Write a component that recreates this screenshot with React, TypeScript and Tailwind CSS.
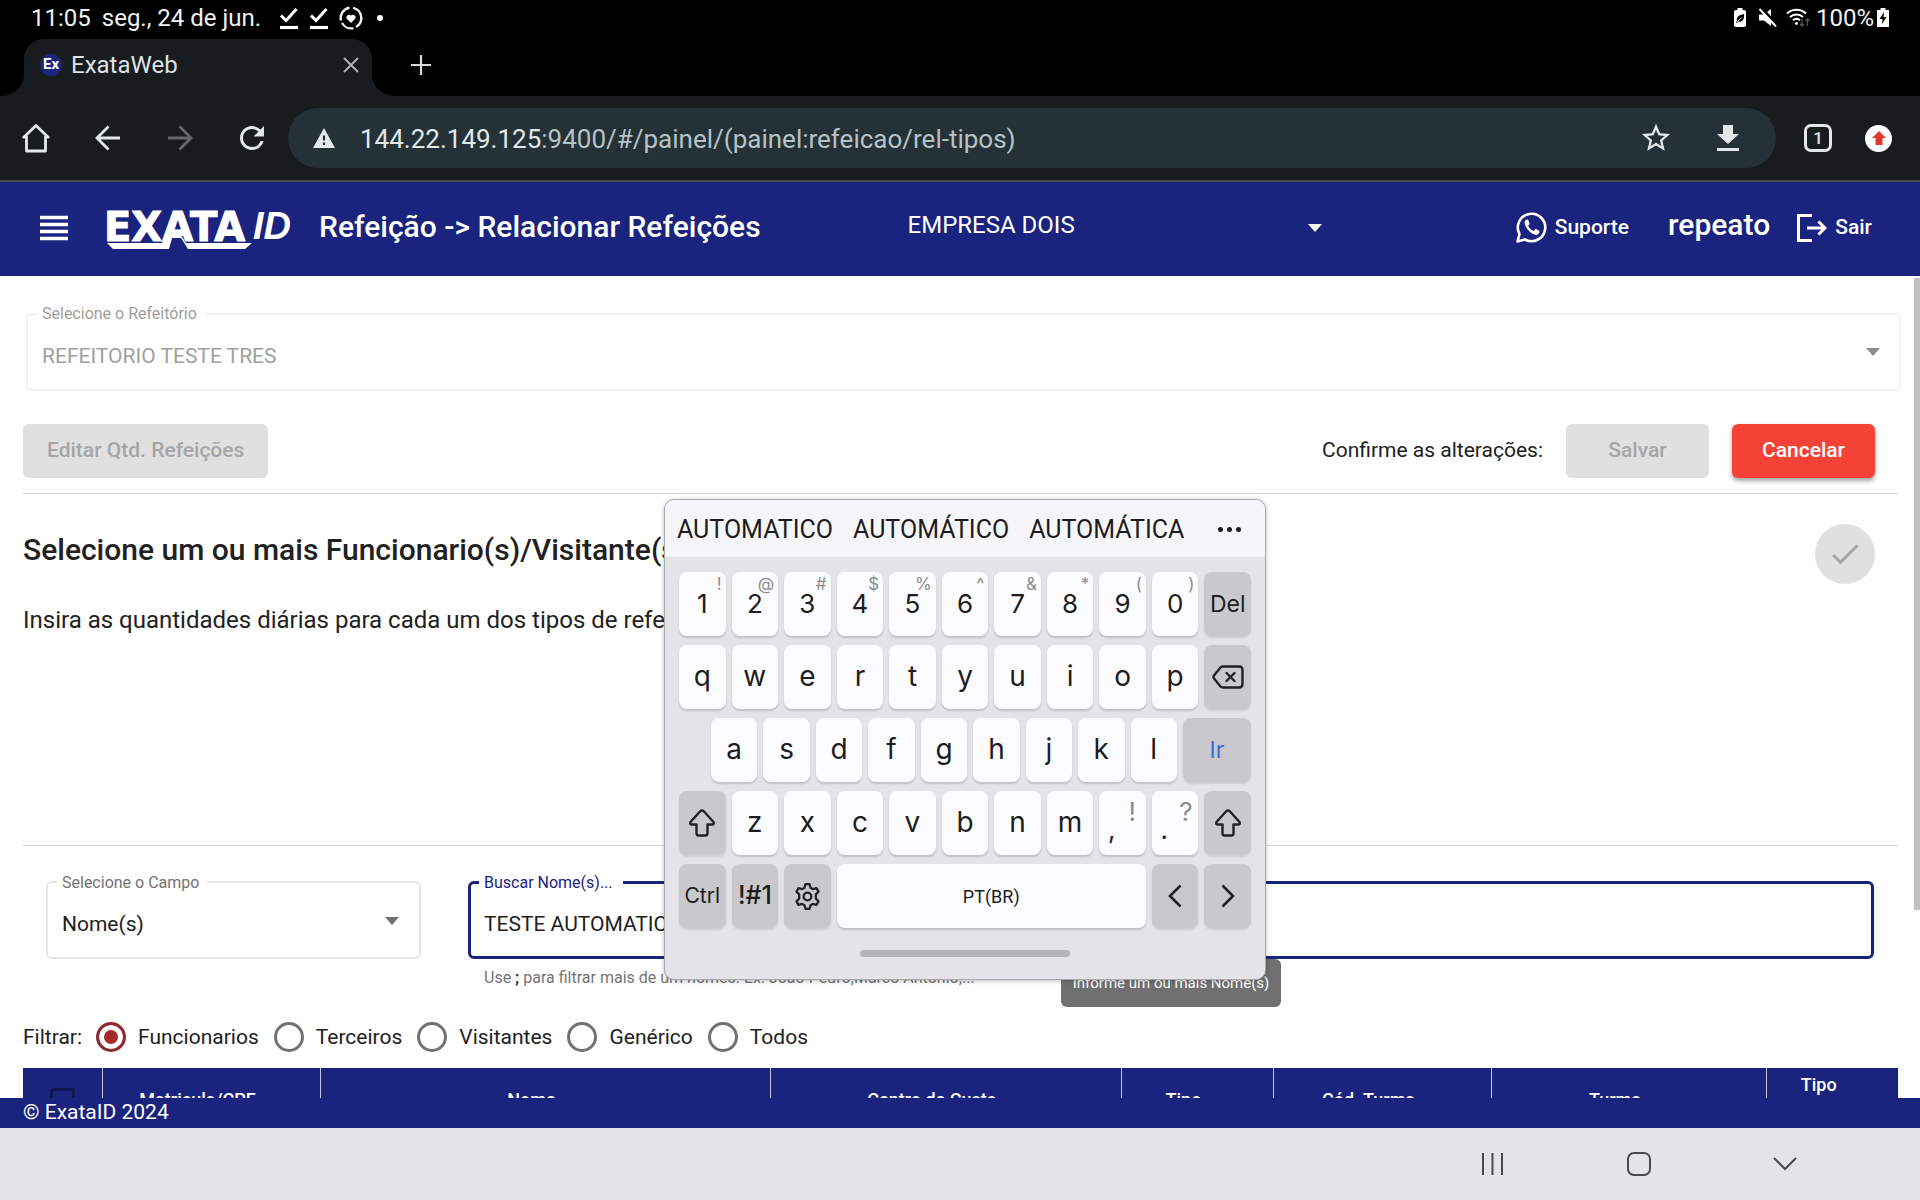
import React from "react";
import { MdStarOutline, MdCheck, MdViewHeadline, MdRefresh } from "react-icons/md";

const LIGHT = "#e3e8ea";

function DoneIcon() {
  return (
    <svg width="20" height="24" viewBox="0 0 20 24" fill="none" stroke="#fff" aria-hidden="true">
      <path d="M2 9.5 7 14.5 17.5 3" strokeWidth="3" />
      <path d="M1 21.5H19" strokeWidth="3.2" />
    </svg>
  );
}

function HealthIcon() {
  return (
    <svg width="24" height="24" viewBox="0 0 24 24" fill="none" stroke="#eee" strokeWidth="2.4" aria-hidden="true">
      <path d="M14 1.8A10.4 10.4 0 0 1 17 21" />
      <path d="M14.5 22.1A10.4 10.4 0 0 1 3 17" />
      <path d="M2 14.5A10.4 10.4 0 0 1 10.5 1.7" />
      <path d="M12 17 7.6 12.6a2.7 2.7 0 0 1 4.4-3 2.7 2.7 0 0 1 4.4 3Z" fill="#fff" stroke="none" />
    </svg>
  );
}

function StatusBar() {
  return (
    <div className="flex h-[39px] shrink-0 items-center justify-between bg-black pr-[31px] pb-1 pl-[31px] text-[24px] leading-[32px] text-[#f1f1f1]">
      <div className="flex items-center">
        <span>11:05</span>
        <span className="ml-[11px]">seg., 24 de jun.</span>
        <div className="ml-[18px] flex items-center gap-[10px]">
          <DoneIcon />
          <DoneIcon />
          <HealthIcon />
          <span className="ml-1 size-[6px] rounded-full bg-white" />
        </div>
      </div>
      <div className="flex items-center">
        <svg width="12" height="19" viewBox="0 0 12 19" className="mr-3" aria-hidden="true">
          <path d="M3.5 0h5v2H10a2 2 0 0 1 2 2v13a2 2 0 0 1-2 2H2a2 2 0 0 1-2-2V4a2 2 0 0 1 2-2h1.500Z" fill="#fff" />
          <path d="M10 6c.6 5-1.400 8.500-5.500 7.500L3 15l-1-.7 1-1.500C2 9 5 7 10 6Z" fill="#000" />
          <path d="M3 14 7.500 9.500" stroke="#fff" strokeWidth=".9" />
        </svg>
        <svg width="20" height="20" viewBox="0 0 20 20" className="mr-2" aria-hidden="true">
          <path d="M1 6.500h5L13 1v17l-7-5.500H1Z" fill="#fff" />
          <path d="M2.500 0 20 18.500" stroke="#000" strokeWidth="4" />
          <path d="M1.500 1 18 18.500" stroke="#fff" strokeWidth="2" />
        </svg>
        <svg width="24" height="20" viewBox="0 0 24 20" fill="none" stroke="#fff" strokeWidth="2" className="mr-[6px]" aria-hidden="true">
          <path d="M1 5.500a14 14 0 0 1 19 0" />
          <path d="M4 9a9.500 9.500 0 0 1 13 0" />
          <path d="M7 12.300a5 5 0 0 1 7 0" />
          <circle cx="10.500" cy="15.500" r="1.400" fill="#fff" stroke="none" />
          <path d="M16 11v7m-2-2 2 2 2-2M21.500 18v-7m-2 2 2-2 2 2" stroke="#555" strokeWidth="1.300" />
        </svg>
        <span>100%</span>
        <svg width="12" height="19" viewBox="0 0 12 19" className="ml-[3px]" aria-hidden="true">
          <path d="M3.500 0h5v2H12v17H0V2h3.500Z" fill="#fff" />
          <path d="M7 4 2.500 11h3L5 16l4.500-7h-3Z" fill="#000" />
        </svg>
      </div>
    </div>
  );
}

function TabStrip() {
  return (
    <div className="flex h-[57px] shrink-0 bg-black text-[24px] text-[#dfe2e4]">
      <div className="flex w-6 items-stretch bg-[#191c1f]">
        <div className="flex-1 rounded-br-[22px] bg-black" />
      </div>
      <div className="bg-black">
        <div className="flex h-full w-[348px] items-center rounded-t-[20px] bg-[#191c1f] pr-[12px] pb-[6px] pl-[16px]">
          <span className="flex size-[22px] items-center justify-center rounded-full bg-[#1e237e] text-[15px] leading-none font-bold text-white">
            Ex
          </span>
          <span className="ml-[9px]">ExataWeb</span>
          <button aria-label="Fechar aba" className="ml-auto">
            <svg width="18" height="18" viewBox="0 0 18 18" stroke="#aeb3b5" strokeWidth="2" aria-hidden="true">
              <path d="M2 2 16 16M16 2 2 16" />
            </svg>
          </button>
        </div>
      </div>
      <div className="flex w-[22px] items-stretch bg-[#191c1f]">
        <div className="flex-1 rounded-bl-[22px] bg-black" />
      </div>
      <button aria-label="Nova aba" className="ml-[16px] self-center pb-[6px]">
        <svg width="22" height="22" viewBox="0 0 22 22" stroke="#d6dadc" strokeWidth="2.200" aria-hidden="true">
          <path d="M11 1V21M1 11H21" />
        </svg>
      </button>
    </div>
  );
}

function Toolbar() {
  return (
    <div className="flex h-[86px] shrink-0 items-center border-b-2 border-[#3f4a4a] bg-[#191c1f] pr-[28px] pl-[20px]">
      <div className="flex w-[268px] items-center gap-10">
        <button aria-label="Início">
          <svg width="32" height="32" viewBox="0 0 32 32" fill="none" stroke={LIGHT} strokeWidth="2.800" strokeLinejoin="round" aria-hidden="true">
            <path d="M3 16 16 3.500 29 16M6.500 14V29h19V14" />
          </svg>
        </button>
        <button aria-label="Voltar">
          <svg width="32" height="32" viewBox="0 0 32 32" fill="none" stroke={LIGHT} strokeWidth="2.800" aria-hidden="true">
            <path d="M28 16H5M16.500 4.500 5 16 16.500 27.500" />
          </svg>
        </button>
        <button aria-label="Avançar">
          <svg width="32" height="32" viewBox="0 0 32 32" fill="none" stroke="#666a6c" strokeWidth="2.800" aria-hidden="true">
            <path d="M4 16H27M15.500 4.500 27 16 15.500 27.500" />
          </svg>
        </button>
        <button aria-label="Recarregar" className="-ml-[2px]">
          <MdRefresh size={36} color={LIGHT} />
        </button>
      </div>
      <div className="flex h-[60px] flex-1 items-center rounded-full bg-[#243238] pr-[32px] pl-[25px]">
        <svg width="22" height="20" viewBox="0 0 22 20" aria-hidden="true">
          <path d="M11 0 22 20H0Z" fill={LIGHT} />
          <path d="M11 7.500v5M11 14.500v2.500" stroke="#243238" strokeWidth="2.200" />
        </svg>
        <div className="ml-[25px] flex-1 pt-[2px] text-[26px] leading-[34px] text-[#b6c2c6]">
          <span className="text-[#e3e8ea]">144.22.149.125</span>:9400/#/painel/(painel:refeicao/rel-tipos)
        </div>
        <button aria-label="Favoritar" className="mr-[39px]">
          <MdStarOutline size={34} color={LIGHT} />
        </button>
        <button aria-label="Baixar">
          <svg width="32" height="30" viewBox="0 0 32 30" fill={LIGHT} aria-hidden="true">
            <path d="M11 2h10v9h6L16 21 5 11h6ZM5 25h22v3H5Z" />
          </svg>
        </button>
      </div>
      <button className="ml-[28px] flex size-[28px] items-center justify-center rounded-[7px] border-[3px] border-[#e3e8ea] text-[17px] leading-none font-medium text-[#e3e8ea]">
        1
      </button>
      <button aria-label="Atualizar" className="ml-[33px] flex size-[27px] items-center justify-center rounded-full bg-white">
        <svg width="14" height="14" viewBox="0 0 14 14" fill="#e0382c" aria-hidden="true">
          <path d="M7 0 14 7H10.500V14h-7V7H0Z" />
        </svg>
      </button>
    </div>
  );
}

function Logo() {
  return (
    <div className="relative ml-[29px] flex h-[46px] w-[195px] items-start whitespace-nowrap text-white">
      <span className="w-[149px] font-['DejaVu_Sans',sans-serif] text-[40px] leading-[44px] font-bold [-webkit-text-stroke:1px_white]">EXATA</span>
      <span className="font-['Liberation_Sans',sans-serif] text-[38px] leading-[42px] font-bold italic">ID</span>
      <svg width="150" height="18" viewBox="0 0 150 18" className="absolute top-[29px] left-[2px]" fill="#fff" aria-hidden="true">
        <path d="M1 9H56L60 0H74L80 9H146L139 15H82L75 4H66L63 15H7Z" />
      </svg>
    </div>
  );
}

function AppHeader() {
  return (
    <header className="flex h-[94px] shrink-0 items-center bg-[#1a237e] pr-[48px] pb-[3px] pl-[33px] text-white">
      <button aria-label="Menu">
        <MdViewHeadline size={42} />
      </button>
      <Logo />
      <h1 className="ml-[20px] pb-[2px] text-[30px] leading-[36px] font-medium whitespace-nowrap">Refeição -&gt; Relacionar Refeições</h1>
      <div className="relative ml-[147px] flex w-[424px] items-center">
        <select aria-label="Empresa" className="w-full appearance-none bg-transparent pb-[6px] text-[24px] leading-[32px] outline-none">
          <option>EMPRESA DOIS</option>
        </select>
        <svg width="14" height="8" viewBox="0 0 14 8" className="pointer-events-none absolute right-[10px] fill-white" aria-hidden="true">
          <path d="M0 0H14L7 8Z" />
        </svg>
      </div>
      <a href="#suporte" className="ml-auto flex items-center gap-2 text-[21px] font-medium">
        <svg width="31" height="31" viewBox="0 0 31 31" fill="none" aria-hidden="true">
          <path d="M1.500 29.500 3.500 22A13.700 13.700 0 1 1 9 27.500Z" stroke="#fff" strokeWidth="2.600" strokeLinejoin="round" />
          <path d="M10.500 7.500c-2 1-2.500 3.500-1 6.500 2 4.500 5.500 7.500 9.500 8.800 2.500.6 4.500-1 4.500-3.800l-3.800-2.200-2 2.200c-2.500-1-4.500-3-5.500-5.300l1.500-2-1.700-4.200Z" fill="#fff" />
        </svg>
        Suporte
      </a>
      <span className="ml-[39px] pb-[6px] text-[30px] leading-[36px] font-medium">repeato</span>
      <a href="#sair" className="ml-[27px] flex items-center gap-2 text-[21px] font-medium">
        <svg width="30" height="28" viewBox="0 0 30 28" fill="none" stroke="#fff" strokeWidth="3" aria-hidden="true">
          <path d="M15 1.500H1.500V26.500H15" />
          <path d="M10 14H28M21.500 7.500 28 14 21.500 20.500" />
        </svg>
        Sair
      </a>
    </header>
  );
}

function Caret({ className }: { className: string }) {
  return (
    <svg width="14" height="8" viewBox="0 0 14 8" className={className} aria-hidden="true">
      <path d="M0 0H14L7 8Z" />
    </svg>
  );
}

const filters = ["Funcionarios", "Terceiros", "Visitantes", "Genérico", "Todos"];

const columns = [
  { name: "Matricula/CPF", width: "w-[218px]" },
  { name: "Nome", width: "w-[450px]" },
  { name: "Centro de Custo", width: "w-[351px]" },
  { name: "Tipo", width: "w-[152px]" },
  { name: "Cód. Turma", width: "w-[218px]" },
  { name: "Turma", width: "w-[275px]" },
];

function Content() {
  return (
    <main className="relative min-h-0 flex-1 overflow-hidden bg-[#fefefe] pr-[22px] pl-[23px] text-[#212121]">
      <div className="absolute top-[2px] right-0 h-[632px] w-[6px] bg-[#c1c1c1]" />

      <div className="relative mt-[37px] mr-[-3px] ml-[3px] h-[78px] rounded-[6px] border-2 border-[#f2f2f2]">
        <label htmlFor="refeitorio" className="absolute top-[-12px] left-[9px] bg-[#fefefe] pr-2 pl-[5px] text-[16px] leading-[22px] text-[#9e9e9e]">
          Selecione o Refeitório
        </label>
        <select id="refeitorio" disabled className="h-full w-full appearance-none bg-transparent pt-[10px] pl-[14px] text-[21px] text-[#a0a0a0] opacity-100">
          <option>REFEITORIO TESTE TRES</option>
        </select>
        <Caret className="pointer-events-none absolute top-[33px] right-[19px] fill-[#8d8d8d]" />
      </div>

      <div className="mt-[33px] flex h-[54px] items-center pr-[23px] text-[21px]">
        <button disabled className="h-full rounded-[6px] bg-[#e0e0e0] px-6 font-medium text-[#a6a6a6]">
          Editar Qtd. Refeições
        </button>
        <span className="ml-auto">Confirme as alterações:</span>
        <button disabled className="ml-[23px] h-full w-[143px] rounded-[6px] bg-[#e0e0e0] font-medium text-[#a6a6a6]">
          Salvar
        </button>
        <button className="ml-[23px] h-full w-[143px] rounded-[6px] bg-[#f44336] font-medium text-white shadow-[0_3px_4px_rgba(0,0,0,0.35)]">
          Cancelar
        </button>
      </div>
      <hr className="mt-[15px] border-[#dcdcdc]" />

      <div className="mt-[30px] flex h-[60px] items-center justify-between pr-[23px]">
        <h2 className="pb-2 text-[30px] leading-[36px] font-medium">Selecione um ou mais Funcionario(s)/Visitante(s)</h2>
        <button disabled aria-label="Confirmar" className="flex size-[60px] items-center justify-center rounded-full bg-[#e0e0e0]">
          <MdCheck size={36} color="#a6a6a6" />
        </button>
      </div>
      <p className="mt-[20px] h-[241px] text-[24px] leading-[32px]">
        Insira as quantidades diárias para cada um dos tipos de refeição
      </p>
      <hr className="border-[#dcdcdc]" />

      <div className="mt-[35px] flex pr-[24px] pl-[23px]">
        <div className="relative h-[78px] w-[375px] rounded-[6px] border-2 border-[#e6e6e6]">
          <label htmlFor="campo" className="absolute top-[-11px] left-[9px] bg-[#fefefe] pr-2 pl-[5px] text-[16px] leading-[22px] text-[#737373]">
            Selecione o Campo
          </label>
          <select id="campo" className="h-full w-full appearance-none bg-transparent pt-[10px] pl-[14px] text-[21px] outline-none">
            <option>Nome(s)</option>
          </select>
          <Caret className="pointer-events-none absolute top-[34px] right-[20px] fill-[#6f6f6f]" />
        </div>
        <div className="ml-[47px] flex-1">
          <div className="relative h-[78px] rounded-[6px] border-[3px] border-[#1a237e]">
            <label htmlFor="buscar" className="absolute top-[-12px] left-[8px] bg-[#fefefe] pr-[10px] pl-[5px] text-[16px] leading-[22px] text-[#1a237e]">
              Buscar Nome(s)...
            </label>
            <input id="buscar" type="text" defaultValue="TESTE AUTOMATICO" className="h-full w-full bg-transparent pt-[8px] pl-[13px] text-[21px] outline-none" />
          </div>
          <p className="mt-[7px] pl-[16px] text-[16px] leading-[24px] text-[#757575]">
            Use <b className="text-[#333]">;</b> para filtrar mais de um nomes. Ex: João Pedro;Marco Antonio;...
          </p>
        </div>
      </div>

      <fieldset className="mt-[29px] flex h-[36px] items-center text-[21px] leading-[30px]">
        <legend className="float-left mr-[14px] self-center">Filtrar:</legend>
        {filters.map((name, i) => (
          <label key={name} className="mr-[15px] flex items-center gap-[12px]">
            <input
              type="radio"
              name="filtro"
              defaultChecked={i === 0}
              className="size-[30px] appearance-none rounded-full border-[3px] border-[#717171] checked:border-[#8f2a2e] checked:bg-[#a52a2a] checked:shadow-[inset_0_0_0_5px_#fff]"
            />
            {name}
          </label>
        ))}
      </fieldset>

      <table className="mt-[13px] w-full table-fixed border-collapse bg-[#1a237e] text-[18px] leading-[28px] text-white">
        <thead>
          <tr className="h-[64px]">
            <th className="w-[79px] align-middle">
              <input type="checkbox" aria-label="Selecionar todos" className="mx-auto block size-[25px] appearance-none rounded-[3px] border-[3px] border-[#10164f]" />
            </th>
            {columns.map((c) => (
              <th key={c.name} className={`${c.width} border-l border-[#c5c8e0] pr-[27px] font-medium`}>
                {c.name}
              </th>
            ))}
            <th className="border-l border-[#c5c8e0] pt-[3px] pr-[27px] align-top font-medium">Tipo</th>
          </tr>
        </thead>
      </table>

      <div role="tooltip" className="absolute top-[683px] left-[1061px] flex h-[48px] w-[220px] items-center justify-center rounded-[6px] bg-[#707070] text-[15px] text-white">
        Informe um ou mais Nome(s)
      </div>
    </main>
  );
}

const whiteKey = "flex-1 relative flex items-center justify-center rounded-[8px] bg-[#fcfcff] shadow-[0_2px_2px_rgba(0,0,0,0.16)]";
const grayKey = "flex-1 flex items-center justify-center rounded-[8px] bg-[#c9c8cd] shadow-[0_2px_2px_rgba(0,0,0,0.10)]";
const row = "flex h-[64px] gap-[6px]";

function Letters({ text }: { text: string }) {
  return (
    <>
      {text.split("").map((ch) => (
        <button key={ch} className={`${whiteKey} pb-[2px] text-[28px]`}>{ch}</button>
      ))}
    </>
  );
}

function ShiftKey() {
  return (
    <button aria-label="Shift" className={grayKey}>
      <svg width="28" height="30" viewBox="0 0 28 30" fill="none" stroke="#222" strokeWidth="2.400" strokeLinejoin="round" aria-hidden="true">
        <path d="M14 2.500Q15 2.500 16 3.500L25.500 14Q26.500 16.500 24.500 16.500H19.500V25Q19.500 27.500 17.500 27.500H10.500Q8.500 27.500 8.500 25V16.500H3.500Q1.500 16.500 2.500 14L12 3.500Q13 2.500 14 2.500Z" />
      </svg>
    </button>
  );
}

function GearIcon() {
  return (
    <svg width="29" height="29" viewBox="0 0 24 24" fill="none" stroke="#222" strokeWidth="1.900" strokeLinejoin="round" aria-hidden="true">
      <path d="M10.300 1.800h3.400l.8 3 1.900 1.100 3-.9 1.700 3-2.200 2.200v3.600l2.200 2.200-1.700 3-3-.9-1.900 1.100-.8 3h-3.400l-.8-3-1.900-1.100-3 .9-1.700-3 2.200-2.200v-3.600L2.900 8l1.700-3 3 .9 1.900-1.100Z" />
      <circle cx="12" cy="12" r="3.200" />
    </svg>
  );
}

const digits = [
  ["1", "!"], ["2", "@"], ["3", "#"], ["4", "$"], ["5", "%"],
  ["6", "^"], ["7", "&"], ["8", "*"], ["9", "("], ["0", ")"],
];

function Keyboard() {
  return (
    <section
      aria-label="Teclado"
      className="absolute top-[499px] left-[664px] w-[602px] overflow-hidden rounded-[10px] border border-[#a9a9ab] bg-[#e4e3e8] font-['Inter',sans-serif] text-[#1d1d20] shadow-[0_1px_4px_rgba(0,0,0,0.25)]"
    >
      <div className="flex h-[57px] items-center bg-[#f6f6fa] pt-[2px] pl-[12px] font-['Roboto',sans-serif] text-[25px]">
        <button className="mr-[20px]">AUTOMATICO</button>
        <button className="mr-[20px]">AUTOMÁTICO</button>
        <button>AUTOMÁTICA</button>
        <button aria-label="Mais" className="mr-[24px] ml-auto flex gap-[4px]">
          <span className="size-[5px] rounded-full bg-[#1d1d20]" />
          <span className="size-[5px] rounded-full bg-[#1d1d20]" />
          <span className="size-[5px] rounded-full bg-[#1d1d20]" />
        </button>
      </div>
      <div className="flex flex-col gap-[9px] px-[14px] pt-[15px]">
        <div className={row}>
          {digits.map(([d, alt]) => (
            <button key={d} className={`${whiteKey} pb-[2px] text-[26px]`}>
              {d}
              <span className="absolute top-[2px] right-[4px] text-[17px] leading-[20px] text-[#8c8c90]">{alt}</span>
            </button>
          ))}
          <button className={`${grayKey} text-[23px]`}>Del</button>
        </div>
        <div className={row}>
          <Letters text="qwertyuiop" />
          <button aria-label="Apagar" className={grayKey}>
            <svg width="32" height="24" viewBox="0 0 32 24" fill="none" stroke="#222" strokeWidth="2.400" strokeLinecap="round" strokeLinejoin="round" aria-hidden="true">
              <path d="M11 1.500H27Q30.500 1.500 30.500 5V19Q30.500 22.500 27 22.500H11Q9.500 22.500 8.500 21.500L2 13.500Q1 12 2 10.500L8.500 2.500Q9.500 1.500 11 1.500Z" />
              <path d="M14.500 8 22.500 16M22.500 8 14.500 16" />
            </svg>
          </button>
        </div>
        <div className={`${row} pl-[32px]`}>
          <Letters text="asdfghjkl" />
          <button className="w-[68px] rounded-[8px] bg-[#c9c8cd] text-[23px] text-[#3f6bd8] shadow-[0_2px_2px_rgba(0,0,0,0.10)]">Ir</button>
        </div>
        <div className={row}>
          <ShiftKey />
          <Letters text="zxcvbnm" />
          <button className={`${whiteKey} text-[26px]`}>
            <span className="mt-[12px] mr-[22px]">,</span>
            <span className="absolute top-[6px] right-[10px] leading-[30px] text-[#8c8c90]">!</span>
          </button>
          <button className={`${whiteKey} text-[26px]`}>
            <span className="mt-[12px] mr-[22px]">.</span>
            <span className="absolute top-[6px] right-[6px] leading-[30px] text-[#8c8c90]">?</span>
          </button>
          <ShiftKey />
        </div>
        <div className={row}>
          <button className={`${grayKey} text-[21px]`}>Ctrl</button>
          <button className={`${grayKey} text-[25px] font-medium`}>!#1</button>
          <button aria-label="Configurações" className={grayKey}><GearIcon /></button>
          <button className="w-[309px] rounded-[8px] bg-[#fcfcff] font-['Roboto',sans-serif] text-[18px] shadow-[0_2px_2px_rgba(0,0,0,0.16)]">PT(BR)</button>
          <button aria-label="Esquerda" className={grayKey}>
            <svg width="16" height="24" viewBox="0 0 16 24" fill="none" stroke="#222" strokeWidth="2.600" aria-hidden="true">
              <path d="M13.500 1.500 3 12 13.500 22.500" />
            </svg>
          </button>
          <button aria-label="Direita" className={grayKey}>
            <svg width="16" height="24" viewBox="0 0 16 24" fill="none" stroke="#222" strokeWidth="2.600" aria-hidden="true">
              <path d="M2.500 1.500 13 12 2.500 22.500" />
            </svg>
          </button>
        </div>
      </div>
      <div className="flex h-[51px] items-center justify-center">
        <span className="h-[7px] w-[210px] rounded-full bg-[#b5b4b9]" />
      </div>
    </section>
  );
}

function NavBar() {
  return (
    <nav className="flex h-[72px] shrink-0 items-center justify-end gap-[122px] bg-[#e4e3e8] pr-[123px]">
      <button aria-label="Recentes">
        <svg width="24" height="24" viewBox="0 0 24 24" stroke="#4a4a4c" strokeWidth="2" aria-hidden="true">
          <path d="M2 1V23M11.500 1V23M21 1V23" />
        </svg>
      </button>
      <button aria-label="Início" className="size-[24px] rounded-[7px] border-2 border-[#4a4a4c]" />
      <button aria-label="Ocultar teclado">
        <svg width="24" height="24" viewBox="0 0 24 24" fill="none" stroke="#4a4a4c" strokeWidth="2" aria-hidden="true">
          <path d="M1 6 12 17 23 6" />
        </svg>
      </button>
    </nav>
  );
}

export default function App() {
  return (
    <div className="relative flex h-screen flex-col overflow-hidden font-['Roboto',sans-serif]">
      <StatusBar />
      <TabStrip />
      <Toolbar />
      <AppHeader />
      <Content />
      <footer className="h-[30px] shrink-0 bg-[#1a237e] pl-[23px] text-[21px] leading-[28px] text-white">© ExataID 2024</footer>
      <NavBar />
      <Keyboard />
    </div>
  );
}
